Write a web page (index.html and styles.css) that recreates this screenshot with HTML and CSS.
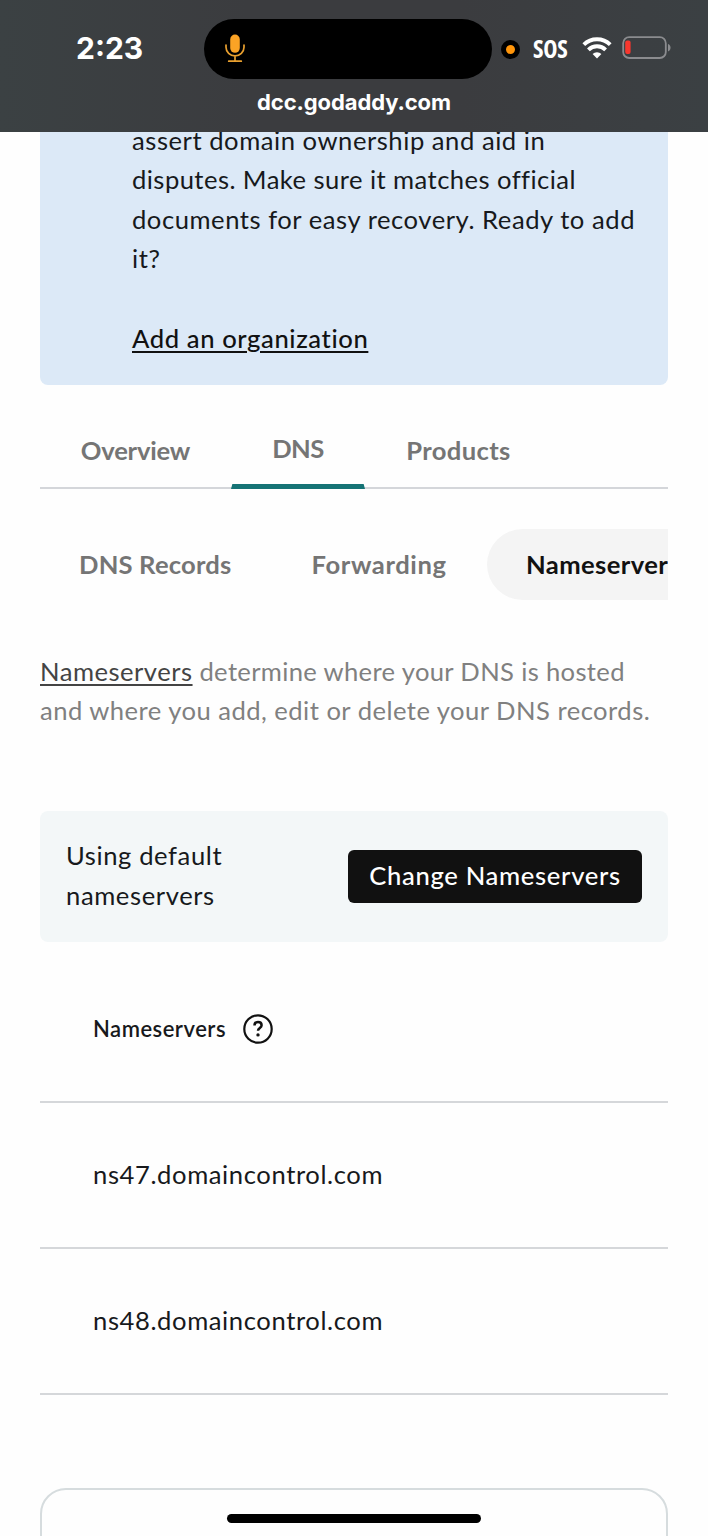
FILE: index.html
```html
<!DOCTYPE html>
<html lang="en">
<head>
<meta charset="utf-8">
<title>Domain DNS</title>
<link rel="stylesheet" href="styles.css">
</head>
<body>
<div class="screen">
  <header class="status">
    <div class="status-row">
      <div class="clock"><span>2:23</span></div>
      <div class="island">
        <svg class="mic" width="20" height="29" viewBox="0 0 20 29">
          <rect x="5.2" y="0.6" width="9.6" height="18.2" rx="4.8" fill="#fba325"/>
          <path d="M1 11v2.200a9 8.600 0 0 0 18 0V11M10 22v5M3.700 27.200h12.600" fill="none" stroke="#e9a02f" stroke-width="1.7" stroke-linecap="round"/>
        </svg>
      </div>
      <div class="indicators">
        <i class="rec"></i>
        <span class="sos">SOS</span>
        <svg class="wifi" width="30" height="22" viewBox="0 0 30 22">
          <g fill="none" stroke="#fff" stroke-width="3.9">
            <path d="M1.800 7.600a18.800 18.800 0 0 1 26.400 0"/>
            <path d="M6.400 12.800a12.200 12.200 0 0 1 17.200 0"/>
          </g>
          <path d="M10.600 17.100a6.300 6.300 0 0 1 8.800 0L15 21.400z" fill="#fff"/>
        </svg>
        <svg class="battery" width="50" height="24" viewBox="0 0 50 24">
          <rect x="1.200" y="1.200" width="42.600" height="20.800" rx="6" fill="none" stroke="#8b8c8f" stroke-width="1.800"/>
          <rect x="3.200" y="4.600" width="5.400" height="13.400" rx="2" fill="#f8372e"/>
          <path d="M46 8c3.400 1.200 3.400 6.200 0 7.400z" fill="#8b8c8f"/>
        </svg>
      </div>
    </div>
    <div class="host"><span>dcc.godaddy.com</span></div>
  </header>

  <main class="page">
    <section class="notice">
      <p class="notice-text">assert domain ownership and aid in<br><span class="snug">disputes. Make sure it matches official</span><br>documents for easy recovery. Ready to add<br>it?</p>
      <a class="notice-link">Add an organization</a>
    </section>

    <nav class="tabs">
      <a class="tab tab-overview">Overview</a>
      <a class="tab tab-dns">DNS</a>
      <a class="tab tab-products">Products</a>
    </nav>

    <nav class="subtabs">
      <a class="pill pill-records">DNS Records</a>
      <a class="pill pill-forwarding">Forwarding</a>
      <a class="pill pill-active">Nameservers</a>
    </nav>

    <p class="intro"><span class="intro-lead"><a class="intro-link">Nameservers</a> determine where your DNS is hosted</span><br>and where you add, edit or delete your DNS records.</p>

    <section class="current">
      <p class="current-text">Using default<br>nameservers</p>
      <button class="change">Change Nameservers</button>
    </section>

    <section class="table">
      <div class="row row-head">
        <span class="head-label">Nameservers</span>
        <svg class="help" width="30" height="30" viewBox="0 0 30 30" fill="none" stroke="#111">
          <circle cx="15" cy="15" r="13.700" stroke-width="2.200"/>
          <path d="M11.500 11.600c0-2.300 1.500-3.500 3.500-3.500s3.600 1.200 3.600 3.200c0 2.700-3.600 2.700-3.600 5.500" stroke-width="2.500"/>
          <circle cx="15" cy="20.900" r="1.700" fill="#111" stroke="none"/>
        </svg>
      </div>
      <div class="row"><span>ns47.domaincontrol.com</span></div>
      <div class="row"><span>ns48.domaincontrol.com</span></div>
    </section>

    <section class="next-card"></section>
  </main>
  <div class="home-bar"></div>
</div>
</body>
</html>
```

FILE: styles.css
```css
* { box-sizing: border-box; }
body { margin: 0; background: #fefefe; }
p { margin: 0; }

.screen {
  position: relative;
  width: 708px;
  height: 1536px;
  overflow: hidden;
  background: #fefefe;
  color: #17191c;
  font-family: Lato, "Open Sans", sans-serif;
  font-size: 25.6px;
  line-height: 39.4px;
  letter-spacing: 0.6px;
  white-space: nowrap;
}

/* Status bar */
.status {
  height: 132px;
  padding-top: 19px;
  background: linear-gradient(90deg, #3b4143, #3b3c3f 35%, #3b3c3f 65%, #3b4043);
  color: #fff;
  font-family: Inter, sans-serif;
}
.status-row { display: grid; grid-template-columns: 204px 288px 1fr; height: 60px; }
.clock {
  padding-left: 76px;
  font-size: 30px;
  font-weight: 700;
  line-height: 59px;
  letter-spacing: 0;
}
.island { display: flex; align-items: center; padding-left: 21px; border-radius: 30px; background: #000; }
.mic { margin-top: -2px; }
.indicators { display: flex; align-items: center; padding-left: 9px; }
.rec { width: 19px; height: 19px; border: 5px solid #000; border-radius: 50%; background: #ff950a; }
.sos {
  width: 38px;
  margin-left: 13px;
  font-family: "Open Sans", sans-serif;
  font-size: 24px;
  font-weight: 700;
  font-stretch: 80%;
  letter-spacing: -0.2px;
}
.wifi { margin-left: 11px; margin-top: -3px; }
.battery { margin-left: 10px; margin-top: -2px; }
.host {
  height: 46px;
  font-size: 22px;
  font-weight: 700;
  line-height: 46px;
  letter-spacing: -0.1px;
  text-align: center;
}

/* Page body */
.page { display: flex; flex-direction: column; height: 1404px; padding: 0 40px; overflow: hidden; }

.notice {
  flex: none;
  height: 253px;
  padding-left: 92px;
  overflow: hidden;
  border-radius: 0 0 8px 8px;
  background: #dce9f7;
}
.notice-text { margin-top: -11px; letter-spacing: 0.54px; }
.snug { letter-spacing: 0.44px; }
.notice-link {
  display: inline-block;
  margin-top: 40.4px;
  color: #111;
  font-weight: 500;
  text-decoration: underline;
  text-decoration-thickness: 2px;
  text-underline-offset: 3px;
}

.tabs {
  display: flex;
  flex: none;
  height: 104px;
  padding-top: 31px;
  border-bottom: 2px solid #d4d6da;
  color: #757575;
  font-weight: 700;
  letter-spacing: 0.1px;
}
.tab { height: 73px; line-height: 68px; text-align: center; }
.tab-overview { width: 191px; letter-spacing: -0.2px; }
.tab-dns { width: 134px; line-height: 64px; letter-spacing: -0.5px; background: linear-gradient(#157375, #157375) 0 68px / 100% 5px no-repeat; clip-path: polygon(0 0, 100% 0, 99% 68px, 100% 100%, 0 100%, 1% 68px); }
.tab-products { width: 187px; letter-spacing: 0.35px; }

.subtabs {
  display: flex;
  flex: none;
  height: 71px;
  margin-top: 40px;
  overflow: hidden;
  color: #757575;
  font-weight: 700;
  line-height: 71px;
}
.pill { flex: none; padding-left: 40px; }
.pill-records { width: 232px; padding-left: 39px; letter-spacing: 0.17px; }
.pill-forwarding { width: 215px; padding-left: 39.5px; letter-spacing: 0.6px; }
.pill-active { width: 222px; padding-left: 39px; border-radius: 36px; background: #f4f4f4; color: #111; letter-spacing: 0.4px; }

.intro { margin-top: 52px; color: #808080; letter-spacing: 0.47px; }
.intro-lead { letter-spacing: 0.34px; }
.intro-link { color: #444; letter-spacing: 0.5px; text-decoration: underline; text-decoration-thickness: 2px; text-underline-offset: 3px; }

.current {
  display: flex;
  flex: none;
  align-items: center;
  justify-content: space-between;
  height: 131px;
  margin-top: 80px;
  padding: 0 26px;
  border-radius: 8px;
  background: #f3f7f8;
}
.current-text { margin-top: -1px; letter-spacing: 0.6px; }
.change {
  width: 294px;
  height: 53px;
  padding: 0 0 2px;
  border: 0;
  border-radius: 6px;
  background: #111;
  color: #fff;
  font: inherit;
  font-weight: 500;
  letter-spacing: 0.68px;
}

.table { flex: none; margin-top: 15px; }
.row {
  display: flex;
  align-items: center;
  height: 146px;
  padding-left: 53px;
  border-bottom: 2px solid #d5d7da;
}
.row-head { font-size: 22px; font-weight: 600; letter-spacing: 0.5px; }
.head-label { width: 133px; margin-top: -1px; }
.help { margin-left: 17px; }

.next-card {
  flex: none;
  height: 120px;
  margin-top: 93px;
  border: 2px solid #d6dcde;
  border-radius: 26px;
}

/* Home indicator floats over the page */
.home-bar {
  position: absolute;
  bottom: 13px;
  left: 227px;
  width: 254px;
  height: 9px;
  border-radius: 5px;
  background: #000;
}
```
